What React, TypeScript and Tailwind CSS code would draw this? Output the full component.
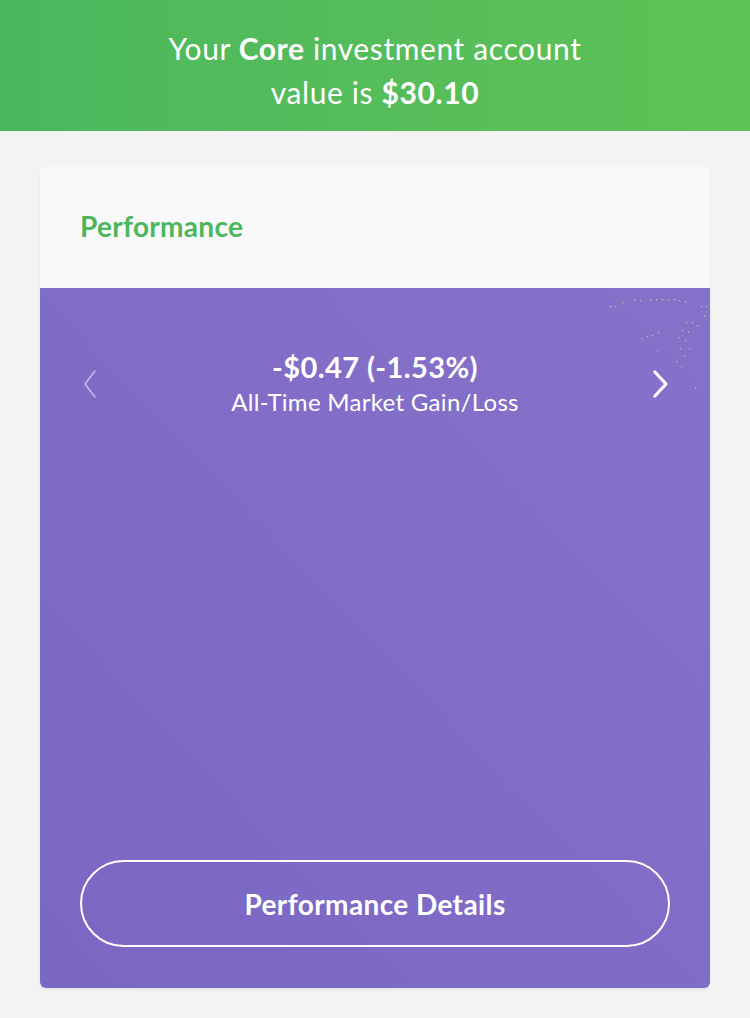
const dots: [number, number][] = [
  [615, 306], [622, 302], [634, 299], [640, 300], [650, 299], [656, 299], [662, 299], [668, 299], [674, 299], [679, 300], [685, 301],
  [610, 306], [701, 306], [706, 306], [704, 315], [686, 322], [692, 322], [697, 325], [682, 330], [688, 331],
  [652, 335], [647, 336], [658, 332], [641, 338], [678, 337], [685, 340], [657, 350], [680, 348], [689, 348],
  [684, 355], [676, 361], [681, 366], [695, 387],
];

const ChevronLeft = () => (
  <svg width="16" height="30" viewBox="0 0 16 30" fill="none">
    <path d="M13 2 L3 15 L13 28" stroke="rgba(255,255,255,0.55)" strokeWidth="1.5" strokeLinecap="round" strokeLinejoin="round" />
  </svg>
);

const ChevronRight = () => (
  <svg width="18" height="30" viewBox="0 0 18 30" fill="none">
    <path d="M3 3 L14 15 L3 27" stroke="#ffffff" strokeWidth="3.2" strokeLinecap="round" strokeLinejoin="round" />
  </svg>
);

export default function App() {
  return (
    <div className="min-h-[1018px] w-full bg-[#f3f3f3] font-['Lato','Noto_Sans',sans-serif]">
      <header className="h-[131px] bg-gradient-to-r from-[#4bb75e] to-[#5fc256] flex flex-col items-center justify-center text-white text-[30px] leading-[44px] tracking-[0.6px] pt-[8px]">
        <p>
          Your <span className="font-bold">Core</span> investment account
        </p>
        <p>
          value is <span className="font-bold">$30.10</span>
        </p>
      </header>

      <div className="px-10 pt-9">
        <div className="relative rounded-md overflow-hidden shadow-[0_2px_3px_rgba(0,0,0,0.06)]">
          <div className="h-[121px] bg-[#f9f9f9] flex items-center px-10">
            <h2 className="text-[28px] font-bold text-[#4cb65c] tracking-[0.3px] pb-[4px]">Performance</h2>
          </div>

          <div className="h-[700px] bg-gradient-to-bl from-[#8672ca] to-[#7a67c4] flex flex-col">
            <div className="flex items-center justify-between pl-[42px] pr-[40px] pt-[62px]">
              <ChevronLeft />
              <div className="flex flex-col items-center text-white">
                <p className="text-[29px] font-bold leading-[34px] tracking-[0.4px]">-$0.47 (-1.53%)</p>
                <p className="text-[24px] leading-[30px] mt-[3px] tracking-[0.3px]">All-Time Market Gain/Loss</p>
              </div>
              <ChevronRight />
            </div>

            <div className="flex-1" />

            <div className="px-10 pb-[41px]">
              <button className="w-full h-[87px] rounded-full border-2 border-white text-white text-[28px] font-bold tracking-[0.4px]">
                Performance Details
              </button>
            </div>
          </div>

          <svg className="absolute left-0 top-0 pointer-events-none" width="670" height="821" viewBox="40 167 670 821">
            {dots.map(([x, y], i) => (
              <rect key={i} x={x} y={y} width="1.2" height="1.2" fill="#c9e6a8" opacity="0.8" />
            ))}
          </svg>
        </div>
      </div>
    </div>
  );
}
